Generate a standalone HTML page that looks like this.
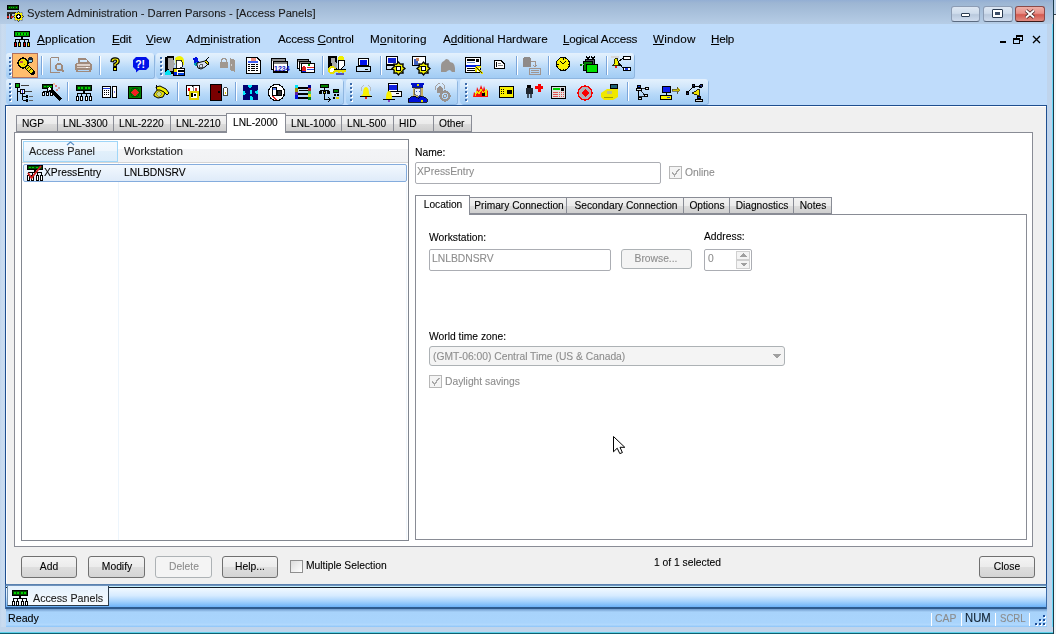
<!DOCTYPE html>
<html><head><meta charset="utf-8"><style>
html,body{margin:0;padding:0;width:1056px;height:634px;overflow:hidden;background:#c4d7ed}
.t{position:absolute;white-space:nowrap;font-family:"Liberation Sans", sans-serif;will-change:transform;-webkit-text-stroke:0.1px currentColor}
u{text-decoration:underline;text-underline-offset:1px}
</style></head><body>
<div style="position:absolute;left:0;top:0;width:1056px;height:634px;background:#c4d7ed"></div><div style="position:absolute;left:0px;top:0px;width:1056px;height:24px;background:linear-gradient(#93aed4 0px,#9db6d3 3px,#b6cde6 24px)"></div><div style="position:absolute;left:0px;top:24px;width:6px;height:610px;background:linear-gradient(90deg,#c0d4ea,#cadcf0 2px,#c6daef)"></div><div style="position:absolute;left:1047px;top:24px;width:9px;height:610px;background:#bfd4ec"></div><div style="position:absolute;left:1052px;top:24px;width:1px;height:610px;background:#69d8f8"></div><div style="position:absolute;left:1053px;top:0px;width:1px;height:634px;background:#1a3a4a"></div><div style="position:absolute;left:1054px;top:0px;width:2px;height:14px;background:#c4d8ee"></div><div style="position:absolute;left:1054px;top:14px;width:2px;height:1px;background:#404850"></div><div style="position:absolute;left:1054px;top:15px;width:2px;height:619px;background:#f6f6f6"></div><div style="position:absolute;left:0px;top:627px;width:1053px;height:5px;background:#c0d5ec"></div><div style="position:absolute;left:0px;top:632px;width:1053px;height:1px;background:#5fd0ea"></div><div style="position:absolute;left:0px;top:633px;width:1053px;height:1px;background:#0f6070"></div><div class="t" style="left:27px;top:8.02px;font-size:11.2px;line-height:11.2px;color:#1a1a1a;">System Administration - Darren Parsons - [Access Panels]</div><div style="position:absolute;left:951px;top:6px;width:29px;height:16px;box-sizing:border-box;border:1px solid #8c9cb4;border-bottom-color:#5a6a80;border-radius:3px;background:linear-gradient(#dde7f3,#cfdcec 45%,#b9c9dd 55%,#cfdcee)"></div><div style="position:absolute;left:983px;top:6px;width:30px;height:16px;box-sizing:border-box;border:1px solid #8c9cb4;border-bottom-color:#5a6a80;border-radius:3px;background:linear-gradient(#dde7f3,#cfdcec 45%,#b9c9dd 55%,#cfdcee)"></div><div style="position:absolute;left:1015px;top:6px;width:30px;height:16px;box-sizing:border-box;border:1px solid #8a4a48;border-bottom-color:#3a1a1a;border-radius:3px;background:linear-gradient(#eeb0a8,#e89088 45%,#d45a50 55%,#e08a80)"></div><div style="position:absolute;left:961px;top:13px;width:9px;height:4px;box-sizing:border-box;border:1px solid #2a3a50;background:#fff;border-radius:1px"></div><div style="position:absolute;left:992px;top:9px;width:11px;height:9px;box-sizing:border-box;border:1px solid #2a3a50;background:#fff;border-radius:1px"></div><div style="position:absolute;left:995px;top:12px;width:5px;height:3px;background:#3a4c66"></div><svg style="position:absolute;left:1024px;top:9px;overflow:visible" width="12" height="10" viewBox="0 0 12 10" shape-rendering="crispEdges"><path d="M2 1.5 L10 8.5 M10 1.5 L2 8.5" stroke="#3a1a1a" stroke-width="3.6" fill="none" shape-rendering="geometricPrecision"/><path d="M2 1.5 L10 8.5 M10 1.5 L2 8.5" stroke="#fff" stroke-width="2" fill="none" shape-rendering="geometricPrecision"/></svg><div style="position:absolute;left:6px;top:24px;width:1041px;height:81px;background:#bfdcfb"></div><div class="t" style="left:37px;top:33.10px;font-size:11.7px;line-height:11.7px;color:#000;letter-spacing:0.115px;"><u>A</u>pplication</div><div class="t" style="left:111.5px;top:33.10px;font-size:11.7px;line-height:11.7px;color:#000;letter-spacing:-0.228px;"><u>E</u>dit</div><div class="t" style="left:145.75px;top:33.10px;font-size:11.7px;line-height:11.7px;color:#000;letter-spacing:-0.037px;"><u>V</u>iew</div><div class="t" style="left:186.25px;top:33.10px;font-size:11.7px;line-height:11.7px;color:#000;letter-spacing:0.062px;">Ad<u>m</u>inistration</div><div class="t" style="left:277.75px;top:33.10px;font-size:11.7px;line-height:11.7px;color:#000;letter-spacing:-0.209px;">Access <u>C</u>ontrol</div><div class="t" style="left:369.6px;top:33.10px;font-size:11.7px;line-height:11.7px;color:#000;letter-spacing:0.207px;">M<u>o</u>nitoring</div><div class="t" style="left:442.75px;top:33.10px;font-size:11.7px;line-height:11.7px;color:#000;letter-spacing:-0.032px;">A<u>d</u>ditional Hardware</div><div class="t" style="left:563px;top:33.10px;font-size:11.7px;line-height:11.7px;color:#000;letter-spacing:-0.225px;"><u>L</u>ogical Access</div><div class="t" style="left:653px;top:33.10px;font-size:11.7px;line-height:11.7px;color:#000;letter-spacing:0.148px;"><u>W</u>indow</div><div class="t" style="left:711.25px;top:33.10px;font-size:11.7px;line-height:11.7px;color:#000;letter-spacing:-0.266px;"><u>H</u>elp</div><div style="position:absolute;left:1000px;top:41px;width:6px;height:2px;background:#000"></div><div style="position:absolute;left:1016px;top:35px;width:7px;height:6px;box-sizing:border-box;border:1px solid #000;border-top-width:2px"></div><div style="position:absolute;left:1013px;top:38px;width:7px;height:6px;box-sizing:border-box;border:1px solid #000;border-top-width:2px;background:#bfdcfb"></div><svg style="position:absolute;left:1032px;top:35px;overflow:visible" width="9" height="9" viewBox="0 0 9 9" shape-rendering="crispEdges"><path d="M1 1 L8 8 M8 1 L1 8" stroke="#000" stroke-width="1.3" fill="none" shape-rendering="geometricPrecision"/></svg><div style="position:absolute;left:6px;top:53px;width:148px;height:25px;box-sizing:border-box;border-radius:3px;background:linear-gradient(#e4f1fd,#d2e7fb 30%,#b7d9f9 60%,#a2ccf4);box-shadow:1px 1px 0 #8fb6e0"></div><div style="position:absolute;left:156px;top:53px;width:478px;height:25px;box-sizing:border-box;border-radius:3px;background:linear-gradient(#e4f1fd,#d2e7fb 30%,#b7d9f9 60%,#a2ccf4);box-shadow:1px 1px 0 #8fb6e0"></div><div style="position:absolute;left:6px;top:79px;width:337px;height:25px;box-sizing:border-box;border-radius:3px;background:linear-gradient(#e4f1fd,#d2e7fb 30%,#b7d9f9 60%,#a2ccf4);box-shadow:1px 1px 0 #8fb6e0"></div><div style="position:absolute;left:346px;top:79px;width:111px;height:25px;box-sizing:border-box;border-radius:3px;background:linear-gradient(#e4f1fd,#d2e7fb 30%,#b7d9f9 60%,#a2ccf4);box-shadow:1px 1px 0 #8fb6e0"></div><div style="position:absolute;left:460px;top:79px;width:248px;height:25px;box-sizing:border-box;border-radius:3px;background:linear-gradient(#e4f1fd,#d2e7fb 30%,#b7d9f9 60%,#a2ccf4);box-shadow:1px 1px 0 #8fb6e0"></div><div style="position:absolute;left:10px;top:58px;width:2px;height:2px;background:#fff"></div><div style="position:absolute;left:9px;top:57px;width:2px;height:2px;background:#3d6cab"></div><div style="position:absolute;left:10px;top:62px;width:2px;height:2px;background:#fff"></div><div style="position:absolute;left:9px;top:61px;width:2px;height:2px;background:#3d6cab"></div><div style="position:absolute;left:10px;top:66px;width:2px;height:2px;background:#fff"></div><div style="position:absolute;left:9px;top:65px;width:2px;height:2px;background:#3d6cab"></div><div style="position:absolute;left:10px;top:70px;width:2px;height:2px;background:#fff"></div><div style="position:absolute;left:9px;top:69px;width:2px;height:2px;background:#3d6cab"></div><div style="position:absolute;left:10px;top:74px;width:2px;height:2px;background:#fff"></div><div style="position:absolute;left:9px;top:73px;width:2px;height:2px;background:#3d6cab"></div><div style="position:absolute;left:161px;top:58px;width:2px;height:2px;background:#fff"></div><div style="position:absolute;left:160px;top:57px;width:2px;height:2px;background:#3d6cab"></div><div style="position:absolute;left:161px;top:62px;width:2px;height:2px;background:#fff"></div><div style="position:absolute;left:160px;top:61px;width:2px;height:2px;background:#3d6cab"></div><div style="position:absolute;left:161px;top:66px;width:2px;height:2px;background:#fff"></div><div style="position:absolute;left:160px;top:65px;width:2px;height:2px;background:#3d6cab"></div><div style="position:absolute;left:161px;top:70px;width:2px;height:2px;background:#fff"></div><div style="position:absolute;left:160px;top:69px;width:2px;height:2px;background:#3d6cab"></div><div style="position:absolute;left:161px;top:74px;width:2px;height:2px;background:#fff"></div><div style="position:absolute;left:160px;top:73px;width:2px;height:2px;background:#3d6cab"></div><div style="position:absolute;left:10px;top:84px;width:2px;height:2px;background:#fff"></div><div style="position:absolute;left:9px;top:83px;width:2px;height:2px;background:#3d6cab"></div><div style="position:absolute;left:10px;top:88px;width:2px;height:2px;background:#fff"></div><div style="position:absolute;left:9px;top:87px;width:2px;height:2px;background:#3d6cab"></div><div style="position:absolute;left:10px;top:92px;width:2px;height:2px;background:#fff"></div><div style="position:absolute;left:9px;top:91px;width:2px;height:2px;background:#3d6cab"></div><div style="position:absolute;left:10px;top:96px;width:2px;height:2px;background:#fff"></div><div style="position:absolute;left:9px;top:95px;width:2px;height:2px;background:#3d6cab"></div><div style="position:absolute;left:10px;top:100px;width:2px;height:2px;background:#fff"></div><div style="position:absolute;left:9px;top:99px;width:2px;height:2px;background:#3d6cab"></div><div style="position:absolute;left:351px;top:84px;width:2px;height:2px;background:#fff"></div><div style="position:absolute;left:350px;top:83px;width:2px;height:2px;background:#3d6cab"></div><div style="position:absolute;left:351px;top:88px;width:2px;height:2px;background:#fff"></div><div style="position:absolute;left:350px;top:87px;width:2px;height:2px;background:#3d6cab"></div><div style="position:absolute;left:351px;top:92px;width:2px;height:2px;background:#fff"></div><div style="position:absolute;left:350px;top:91px;width:2px;height:2px;background:#3d6cab"></div><div style="position:absolute;left:351px;top:96px;width:2px;height:2px;background:#fff"></div><div style="position:absolute;left:350px;top:95px;width:2px;height:2px;background:#3d6cab"></div><div style="position:absolute;left:351px;top:100px;width:2px;height:2px;background:#fff"></div><div style="position:absolute;left:350px;top:99px;width:2px;height:2px;background:#3d6cab"></div><div style="position:absolute;left:466px;top:84px;width:2px;height:2px;background:#fff"></div><div style="position:absolute;left:465px;top:83px;width:2px;height:2px;background:#3d6cab"></div><div style="position:absolute;left:466px;top:88px;width:2px;height:2px;background:#fff"></div><div style="position:absolute;left:465px;top:87px;width:2px;height:2px;background:#3d6cab"></div><div style="position:absolute;left:466px;top:92px;width:2px;height:2px;background:#fff"></div><div style="position:absolute;left:465px;top:91px;width:2px;height:2px;background:#3d6cab"></div><div style="position:absolute;left:466px;top:96px;width:2px;height:2px;background:#fff"></div><div style="position:absolute;left:465px;top:95px;width:2px;height:2px;background:#3d6cab"></div><div style="position:absolute;left:466px;top:100px;width:2px;height:2px;background:#fff"></div><div style="position:absolute;left:465px;top:99px;width:2px;height:2px;background:#3d6cab"></div><div style="position:absolute;left:41px;top:56px;width:1px;height:19px;background:#7ba6db"></div><div style="position:absolute;left:42px;top:56px;width:1px;height:19px;background:#fff"></div><div style="position:absolute;left:99px;top:56px;width:1px;height:19px;background:#7ba6db"></div><div style="position:absolute;left:100px;top:56px;width:1px;height:19px;background:#fff"></div><div style="position:absolute;left:322px;top:56px;width:1px;height:19px;background:#7ba6db"></div><div style="position:absolute;left:323px;top:56px;width:1px;height:19px;background:#fff"></div><div style="position:absolute;left:380px;top:56px;width:1px;height:19px;background:#7ba6db"></div><div style="position:absolute;left:381px;top:56px;width:1px;height:19px;background:#fff"></div><div style="position:absolute;left:516px;top:56px;width:1px;height:19px;background:#7ba6db"></div><div style="position:absolute;left:517px;top:56px;width:1px;height:19px;background:#fff"></div><div style="position:absolute;left:548px;top:56px;width:1px;height:19px;background:#7ba6db"></div><div style="position:absolute;left:549px;top:56px;width:1px;height:19px;background:#fff"></div><div style="position:absolute;left:606px;top:56px;width:1px;height:19px;background:#7ba6db"></div><div style="position:absolute;left:607px;top:56px;width:1px;height:19px;background:#fff"></div><div style="position:absolute;left:67px;top:82px;width:1px;height:19px;background:#7ba6db"></div><div style="position:absolute;left:68px;top:82px;width:1px;height:19px;background:#fff"></div><div style="position:absolute;left:177px;top:82px;width:1px;height:19px;background:#7ba6db"></div><div style="position:absolute;left:178px;top:82px;width:1px;height:19px;background:#fff"></div><div style="position:absolute;left:235px;top:82px;width:1px;height:19px;background:#7ba6db"></div><div style="position:absolute;left:236px;top:82px;width:1px;height:19px;background:#fff"></div><div style="position:absolute;left:627px;top:82px;width:1px;height:19px;background:#7ba6db"></div><div style="position:absolute;left:628px;top:82px;width:1px;height:19px;background:#fff"></div><div style="position:absolute;left:5px;top:105px;width:1042px;height:480px;box-sizing:border-box;border:1px solid #1f4f8f;border-bottom:1px solid #4c7ab0;background:#f0f0f0"></div><div style="position:absolute;left:6px;top:106px;width:1040px;height:1px;background:#fff"></div><div style="position:absolute;left:6px;top:106px;width:1px;height:477px;background:#fff"></div><div style="position:absolute;left:14px;top:132px;width:1019px;height:415px;box-sizing:border-box;border:1px solid #898c95;background:#fff"></div><div style="position:absolute;left:16px;top:115px;width:41px;height:17px;box-sizing:border-box;border:1px solid #898c95;border-right:none;background:linear-gradient(#f2f2f2,#ebebeb 50%,#dddddd 51%,#cfcfcf)"></div><div class="t" style="left:21.5px;top:119.37px;font-size:10.2px;line-height:10.2px;color:#000;">NGP</div><div style="position:absolute;left:57px;top:115px;width:56px;height:17px;box-sizing:border-box;border:1px solid #898c95;border-right:none;background:linear-gradient(#f2f2f2,#ebebeb 50%,#dddddd 51%,#cfcfcf)"></div><div class="t" style="left:62.5px;top:119.37px;font-size:10.2px;line-height:10.2px;color:#000;">LNL-3300</div><div style="position:absolute;left:113px;top:115px;width:57px;height:17px;box-sizing:border-box;border:1px solid #898c95;border-right:none;background:linear-gradient(#f2f2f2,#ebebeb 50%,#dddddd 51%,#cfcfcf)"></div><div class="t" style="left:118.5px;top:119.37px;font-size:10.2px;line-height:10.2px;color:#000;">LNL-2220</div><div style="position:absolute;left:170px;top:115px;width:57px;height:17px;box-sizing:border-box;border:1px solid #898c95;border-right:none;background:linear-gradient(#f2f2f2,#ebebeb 50%,#dddddd 51%,#cfcfcf)"></div><div class="t" style="left:175.5px;top:119.37px;font-size:10.2px;line-height:10.2px;color:#000;">LNL-2210</div><div style="position:absolute;left:226px;top:113px;width:60px;height:20px;box-sizing:border-box;border:1px solid #898c95;border-bottom:none;background:#fff"></div><div class="t" style="left:232.5px;top:117.87px;font-size:10.2px;line-height:10.2px;color:#000;">LNL-2000</div><div style="position:absolute;left:285px;top:115px;width:56px;height:17px;box-sizing:border-box;border:1px solid #898c95;border-right:none;background:linear-gradient(#f2f2f2,#ebebeb 50%,#dddddd 51%,#cfcfcf)"></div><div class="t" style="left:290.5px;top:119.37px;font-size:10.2px;line-height:10.2px;color:#000;">LNL-1000</div><div style="position:absolute;left:341px;top:115px;width:52px;height:17px;box-sizing:border-box;border:1px solid #898c95;border-right:none;background:linear-gradient(#f2f2f2,#ebebeb 50%,#dddddd 51%,#cfcfcf)"></div><div class="t" style="left:346.5px;top:119.37px;font-size:10.2px;line-height:10.2px;color:#000;">LNL-500</div><div style="position:absolute;left:393px;top:115px;width:40px;height:17px;box-sizing:border-box;border:1px solid #898c95;border-right:none;background:linear-gradient(#f2f2f2,#ebebeb 50%,#dddddd 51%,#cfcfcf)"></div><div class="t" style="left:398.5px;top:119.37px;font-size:10.2px;line-height:10.2px;color:#000;">HID</div><div style="position:absolute;left:433px;top:115px;width:38px;height:17px;box-sizing:border-box;border:1px solid #898c95;border-right:none;background:linear-gradient(#f2f2f2,#ebebeb 50%,#dddddd 51%,#cfcfcf)"></div><div class="t" style="left:438.5px;top:119.37px;font-size:10.2px;line-height:10.2px;color:#000;">Other</div><div style="position:absolute;left:471px;top:115px;width:1px;height:17px;background:#898c95"></div><div style="position:absolute;left:21px;top:139px;width:388px;height:402px;box-sizing:border-box;border:1px solid #828790;background:#fff"></div><div style="position:absolute;left:22px;top:140px;width:386px;height:23px;background:linear-gradient(#ffffff,#ffffff 40%,#f3f4f6 41%,#f1f2f4)"></div><div style="position:absolute;left:22px;top:162px;width:386px;height:1px;background:#d5d5d5"></div><div style="position:absolute;left:23px;top:141px;width:95px;height:21px;box-sizing:border-box;border:1px solid #9fd6f8;background:linear-gradient(#f3f9fe,#eef6fd 45%,#e2f0fb 46%,#dbecfa)"></div><div style="position:absolute;left:117px;top:141px;width:1px;height:21px;background:#9fd6f8"></div><div class="t" style="left:28.5px;top:146.07px;font-size:10.9px;line-height:10.9px;color:#1e1e1e;">Access Panel</div><div class="t" style="left:124px;top:145.82px;font-size:11.2px;line-height:11.2px;color:#1e1e1e;">Workstation</div><svg style="position:absolute;left:66px;top:141px;overflow:visible" width="9" height="5" viewBox="0 0 9 5" shape-rendering="crispEdges"><path d="M1 4 L4.5 1 L8 4" stroke="#5d8fc4" stroke-width="1.3" fill="none" shape-rendering="geometricPrecision"/></svg><div style="position:absolute;left:118px;top:163px;width:1px;height:377px;background:#edf5fc"></div><div style="position:absolute;left:406px;top:182px;width:1px;height:358px;background:#f0f6fc"></div><div style="position:absolute;left:23px;top:164px;width:384px;height:18px;box-sizing:border-box;border:1px solid #84acdd;border-radius:2px;background:linear-gradient(#f2f8fe,#dfebf9)"></div><div class="t" style="left:44px;top:168.28px;font-size:10.3px;line-height:10.3px;color:#000;">XPressEntry</div><div class="t" style="left:124px;top:168.28px;font-size:10.3px;line-height:10.3px;color:#000;">LNLBDNSRV</div><div class="t" style="left:415px;top:147.78px;font-size:10.3px;line-height:10.3px;color:#000;">Name:</div><div style="position:absolute;left:415px;top:162px;width:246px;height:22px;box-sizing:border-box;border:1px solid #abadb3;border-radius:2px;background:#fff"></div><div class="t" style="left:417px;top:166.78px;font-size:10.3px;line-height:10.3px;color:#8d8d8d;">XPressEntry</div><div style="position:absolute;left:669px;top:166px;width:13px;height:13px;box-sizing:border-box;border:1px solid #b7b7b7;background:#f4f4f4"></div><svg style="position:absolute;left:671px;top:168px;overflow:visible" width="9" height="9" viewBox="0 0 9 9" shape-rendering="crispEdges"><path d="M1 4.5 L3.5 7.5 L8 1" stroke="#a8a8a8" stroke-width="1.5" fill="none"/></svg><div class="t" style="left:685px;top:168.28px;font-size:10.3px;line-height:10.3px;color:#8d8d8d;">Online</div><div style="position:absolute;left:415px;top:214px;width:612px;height:326px;box-sizing:border-box;border:1px solid #898c95;background:#fff"></div><div style="position:absolute;left:415px;top:195px;width:55px;height:20px;box-sizing:border-box;border:1px solid #898c95;border-bottom:none;background:#fff"></div><div class="t" style="left:342.5px;width:200px;text-align:center;top:199.87px;font-size:10.2px;line-height:10.2px;color:#000;">Location</div><div style="position:absolute;left:470px;top:197px;width:97px;height:17px;box-sizing:border-box;border:1px solid #898c95;border-left:none;background:linear-gradient(#f2f2f2,#ebebeb 50%,#dddddd 51%,#cfcfcf)"></div><div class="t" style="left:418.5px;width:200px;text-align:center;top:201.37px;font-size:10.2px;line-height:10.2px;color:#000;">Primary Connection</div><div style="position:absolute;left:567px;top:197px;width:117px;height:17px;box-sizing:border-box;border:1px solid #898c95;border-left:none;background:linear-gradient(#f2f2f2,#ebebeb 50%,#dddddd 51%,#cfcfcf)"></div><div class="t" style="left:525.5px;width:200px;text-align:center;top:201.37px;font-size:10.2px;line-height:10.2px;color:#000;">Secondary Connection</div><div style="position:absolute;left:684px;top:197px;width:46px;height:17px;box-sizing:border-box;border:1px solid #898c95;border-left:none;background:linear-gradient(#f2f2f2,#ebebeb 50%,#dddddd 51%,#cfcfcf)"></div><div class="t" style="left:607.0px;width:200px;text-align:center;top:201.37px;font-size:10.2px;line-height:10.2px;color:#000;">Options</div><div style="position:absolute;left:730px;top:197px;width:64px;height:17px;box-sizing:border-box;border:1px solid #898c95;border-left:none;background:linear-gradient(#f2f2f2,#ebebeb 50%,#dddddd 51%,#cfcfcf)"></div><div class="t" style="left:662.0px;width:200px;text-align:center;top:201.37px;font-size:10.2px;line-height:10.2px;color:#000;">Diagnostics</div><div style="position:absolute;left:794px;top:197px;width:38px;height:17px;box-sizing:border-box;border:1px solid #898c95;border-left:none;background:linear-gradient(#f2f2f2,#ebebeb 50%,#dddddd 51%,#cfcfcf)"></div><div class="t" style="left:713.0px;width:200px;text-align:center;top:201.37px;font-size:10.2px;line-height:10.2px;color:#000;">Notes</div><div class="t" style="left:429px;top:233.28px;font-size:10.3px;line-height:10.3px;color:#000;">Workstation:</div><div style="position:absolute;left:429px;top:249px;width:182px;height:22px;box-sizing:border-box;border:1px solid #abadb3;border-radius:2px;background:#fff"></div><div class="t" style="left:432px;top:253.78px;font-size:10.3px;line-height:10.3px;color:#8d8d8d;">LNLBDNSRV</div><div style="position:absolute;left:621px;top:249px;width:71px;height:20px;box-sizing:border-box;border:1px solid #adb2b5;border-radius:3px;background:#f4f4f4"></div><div class="t" style="left:556.0px;width:200px;text-align:center;top:254.28px;font-size:10.3px;line-height:10.3px;color:#8d8d8d;">Browse...</div><div class="t" style="left:704px;top:232.28px;font-size:10.3px;line-height:10.3px;color:#000;">Address:</div><div style="position:absolute;left:704px;top:249px;width:48px;height:22px;box-sizing:border-box;border:1px solid #abadb3;border-radius:2px;background:#fff"></div><div class="t" style="left:708px;top:253.78px;font-size:10.3px;line-height:10.3px;color:#8d8d8d;">0</div><div style="position:absolute;left:736px;top:251px;width:14px;height:9px;box-sizing:border-box;border:1px solid #d0d0d0;background:#f4f4f4"></div><div style="position:absolute;left:736px;top:260px;width:14px;height:9px;box-sizing:border-box;border:1px solid #d0d0d0;background:#f4f4f4"></div><svg style="position:absolute;left:740px;top:253px;overflow:visible" width="7" height="4" viewBox="0 0 7 4" shape-rendering="crispEdges"><path d="M0 3.5 L3.5 0 L7 3.5Z" fill="#a0a0a0"/></svg><svg style="position:absolute;left:740px;top:263px;overflow:visible" width="7" height="4" viewBox="0 0 7 4" shape-rendering="crispEdges"><path d="M0 0 L3.5 3.5 L7 0Z" fill="#a0a0a0"/></svg><div class="t" style="left:429px;top:332.28px;font-size:10.3px;line-height:10.3px;color:#000;">World time zone:</div><div style="position:absolute;left:429px;top:346px;width:356px;height:20px;box-sizing:border-box;border:1px solid #adb2b5;border-radius:3px;background:#f4f4f4"></div><div class="t" style="left:433px;top:351.78px;font-size:10.3px;line-height:10.3px;color:#8d8d8d;">(GMT-06:00) Central Time (US &amp; Canada)</div><svg style="position:absolute;left:772px;top:354px;overflow:visible" width="9" height="5" viewBox="0 0 9 5" shape-rendering="crispEdges"><path d="M0 0 L9 0 L4.5 4.5Z" fill="#a0a0a0"/></svg><div style="position:absolute;left:429px;top:375px;width:13px;height:13px;box-sizing:border-box;border:1px solid #b7b7b7;background:#f4f4f4"></div><svg style="position:absolute;left:431px;top:377px;overflow:visible" width="9" height="9" viewBox="0 0 9 9" shape-rendering="crispEdges"><path d="M1 4.5 L3.5 7.5 L8 1" stroke="#a8a8a8" stroke-width="1.5" fill="none"/></svg><div class="t" style="left:445px;top:376.78px;font-size:10.3px;line-height:10.3px;color:#8d8d8d;">Daylight savings</div><svg style="position:absolute;left:612px;top:435px;overflow:visible" width="14" height="20" viewBox="0 0 14 20" shape-rendering="crispEdges"><path d="M1.5 1.5 L1.5 16.8 L5.2 13.2 L7.8 18.6 L10.4 17.6 L8 12.3 L12.8 12.3 Z" fill="#fff" stroke="#000" stroke-width="1" stroke-linejoin="round" shape-rendering="geometricPrecision"/></svg><div style="position:absolute;left:21px;top:556px;width:56px;height:22px;box-sizing:border-box;border:1px solid #707070;border-radius:3px;background:linear-gradient(#f4f4f4,#ececec 48%,#dedede 52%,#d4d4d4)"></div><div class="t" style="left:-51.0px;width:200px;text-align:center;top:562.28px;font-size:10.3px;line-height:10.3px;color:#000;">Add</div><div style="position:absolute;left:88px;top:556px;width:57px;height:22px;box-sizing:border-box;border:1px solid #707070;border-radius:3px;background:linear-gradient(#f4f4f4,#ececec 48%,#dedede 52%,#d4d4d4)"></div><div class="t" style="left:16.5px;width:200px;text-align:center;top:562.28px;font-size:10.3px;line-height:10.3px;color:#000;">Modify</div><div style="position:absolute;left:155px;top:556px;width:57px;height:22px;box-sizing:border-box;border:1px solid #adb2b5;border-radius:3px;background:#f4f4f4"></div><div class="t" style="left:83.5px;width:200px;text-align:center;top:562.28px;font-size:10.3px;line-height:10.3px;color:#8d8d8d;">Delete</div><div style="position:absolute;left:222px;top:556px;width:56px;height:22px;box-sizing:border-box;border:1px solid #707070;border-radius:3px;background:linear-gradient(#f4f4f4,#ececec 48%,#dedede 52%,#d4d4d4)"></div><div class="t" style="left:150.0px;width:200px;text-align:center;top:562.28px;font-size:10.3px;line-height:10.3px;color:#000;">Help...</div><div style="position:absolute;left:290px;top:560px;width:13px;height:13px;box-sizing:border-box;border:1px solid #8f8f8f;background:linear-gradient(135deg,#dcdcdc,#fff)"></div><div class="t" style="left:306px;top:560.78px;font-size:10.3px;line-height:10.3px;color:#000;">Multiple Selection</div><div class="t" style="left:654px;top:557.78px;font-size:10.3px;line-height:10.3px;color:#000;">1 of 1 selected</div><div style="position:absolute;left:979px;top:556px;width:56px;height:22px;box-sizing:border-box;border:1px solid #707070;border-radius:3px;background:linear-gradient(#f4f4f4,#ececec 48%,#dedede 52%,#d4d4d4)"></div><div class="t" style="left:907.0px;width:200px;text-align:center;top:562.28px;font-size:10.3px;line-height:10.3px;color:#000;">Close</div><div style="position:absolute;left:6px;top:584px;width:1041px;height:2px;background:linear-gradient(#4f78a8,#7a9cc4)"></div><div style="position:absolute;left:6px;top:586px;width:1041px;height:1px;background:#c4f0ff"></div><div style="position:absolute;left:6px;top:587px;width:1041px;height:1px;background:#121a24"></div><div style="position:absolute;left:6px;top:588px;width:1041px;height:19px;background:linear-gradient(#f2f9ff,#d6ebff 40%,#a6d2fd 70%,#6cb2f8 100%)"></div><div style="position:absolute;left:6px;top:607px;width:1041px;height:2px;background:#2e5a8e"></div><div style="position:absolute;left:6px;top:609px;width:1041px;height:3px;background:linear-gradient(#6f9acb,#a8d2fa)"></div><div style="position:absolute;left:5px;top:584px;width:1px;height:25px;background:#3a6aa8"></div><div style="position:absolute;left:1046px;top:584px;width:1px;height:25px;background:#3a6aa8"></div><div style="position:absolute;left:7px;top:586px;width:102px;height:20px;box-sizing:border-box;border-right:1px solid #2a3a4a;border-bottom:1px solid #2a3a4a;border-left:1px solid #7090b0;background:linear-gradient(#e4f1fd,#f6fbff)"></div><div class="t" style="left:32.5px;top:592.94px;font-size:10.7px;line-height:10.7px;color:#1a1a1a;">Access Panels</div><div style="position:absolute;left:6px;top:612px;width:1041px;height:15px;background:linear-gradient(#a8d3fb,#a9d4fc 70%,#b2d9fd 85%,#8cc4f8)"></div><div class="t" style="left:8px;top:613.44px;font-size:10.7px;line-height:10.7px;color:#000;">Ready</div><div class="t" style="left:935px;top:613.70px;font-size:10.4px;line-height:10.4px;color:#8c8c8c;transform:scaleY(1.12);transform-origin:0 80%">CAP</div><div class="t" style="left:965px;top:612.93px;font-size:11.3px;line-height:11.3px;color:#102030;transform:scaleY(1.12);transform-origin:0 80%">NUM</div><div class="t" style="left:1000px;top:614.37px;font-size:9.6px;line-height:9.6px;color:#8c8c8c;transform:scaleY(1.12);transform-origin:0 80%">SCRL</div><div style="position:absolute;left:931px;top:613px;width:1px;height:13px;background:#fff"></div><div style="position:absolute;left:961px;top:613px;width:1px;height:13px;background:#fff"></div><div style="position:absolute;left:995px;top:613px;width:1px;height:13px;background:#fff"></div><div style="position:absolute;left:1029px;top:613px;width:1px;height:13px;background:#fff"></div><div style="position:absolute;left:1044px;top:616px;width:2px;height:2px;background:#fff"></div><div style="position:absolute;left:1043px;top:615px;width:2px;height:2px;background:#1d4f9a"></div><div style="position:absolute;left:1040px;top:620px;width:2px;height:2px;background:#fff"></div><div style="position:absolute;left:1039px;top:619px;width:2px;height:2px;background:#1d4f9a"></div><div style="position:absolute;left:1044px;top:620px;width:2px;height:2px;background:#fff"></div><div style="position:absolute;left:1043px;top:619px;width:2px;height:2px;background:#1d4f9a"></div><div style="position:absolute;left:1036px;top:624px;width:2px;height:2px;background:#fff"></div><div style="position:absolute;left:1035px;top:623px;width:2px;height:2px;background:#1d4f9a"></div><div style="position:absolute;left:1040px;top:624px;width:2px;height:2px;background:#fff"></div><div style="position:absolute;left:1039px;top:623px;width:2px;height:2px;background:#1d4f9a"></div><div style="position:absolute;left:1044px;top:624px;width:2px;height:2px;background:#fff"></div><div style="position:absolute;left:1043px;top:623px;width:2px;height:2px;background:#1d4f9a"></div><svg style="position:absolute;left:7px;top:5px;overflow:visible" width="18" height="18" viewBox="0 0 18 18" shape-rendering="crispEdges"><rect x="0.5" y="0.5" width="11" height="4" fill="#004800" stroke="#000" stroke-width="1"/><rect x="2" y="2" width="1" height="1" fill="#00d000" /><rect x="4" y="2" width="1" height="1" fill="#00d000" /><rect x="6" y="2" width="1" height="1" fill="#00d000" /><rect x="9" y="2" width="1" height="1" fill="#00d000" /><rect x="0" y="7" width="9" height="2" fill="#303030" /><rect x="0" y="9" width="2" height="5" fill="#202020" /><rect x="3" y="9" width="2" height="5" fill="#202020" /><rect x="0" y="11" width="2" height="2" fill="#d02020" /><rect x="4" y="11" width="2" height="2" fill="#d02020" /><path d="M17.00 11.50 L15.06 12.97 L15.39 15.39 L12.97 15.06 L11.50 17.00 L10.03 15.06 L7.61 15.39 L7.94 12.97 L6.00 11.50 L7.94 10.03 L7.61 7.61 L10.03 7.94 L11.50 6.00 L12.97 7.94 L15.39 7.61 L15.06 10.03 Z" fill="#000" stroke="none" stroke-width="1" shape-rendering="geometricPrecision"/><circle cx="11.5" cy="11.5" r="3.3" fill="none" stroke="#f8f000" stroke-width="1.6"/><circle cx="11.5" cy="11.5" r="1.2" fill="#fff" stroke="none" stroke-width="1"/></svg><svg style="position:absolute;left:14px;top:31px;overflow:visible" width="16" height="16" viewBox="0 0 16 16" shape-rendering="crispEdges"><rect x="0.5" y="0.5" width="15" height="5" fill="#00a000" stroke="#000" stroke-width="1"/><rect x="2" y="2" width="12" height="2" fill="#00e000" /><rect x="3" y="2" width="1" height="2" fill="#004000" /><rect x="6" y="2" width="1" height="2" fill="#004000" /><rect x="9" y="2" width="1" height="2" fill="#004000" /><rect x="12" y="2" width="1" height="2" fill="#004000" /><rect x="7" y="6" width="2" height="3" fill="#000" /><rect x="1" y="8" width="14" height="1" fill="#000" /><rect x="1" y="8" width="1" height="3" fill="#000" /><rect x="5" y="8" width="1" height="3" fill="#000" /><rect x="10" y="8" width="1" height="3" fill="#000" /><rect x="14" y="8" width="1" height="3" fill="#000" /><rect x="0.5" y="11.5" width="2" height="4" fill="#e00000" stroke="#000" stroke-width="1"/><rect x="4.5" y="11.5" width="2" height="4" fill="#f0e000" stroke="#000" stroke-width="1"/><rect x="9.5" y="11.5" width="2" height="4" fill="#e00000" stroke="#000" stroke-width="1"/><rect x="13.5" y="11.5" width="2" height="4" fill="#f0e000" stroke="#000" stroke-width="1"/></svg><svg style="position:absolute;left:12px;top:53px;overflow:visible" width="26" height="25" viewBox="0 0 26 25" shape-rendering="crispEdges"><rect x="0.5" y="0.5" width="25" height="24" fill="#ffbd6e" stroke="#b07060" stroke-width="1"/></svg><svg style="position:absolute;left:17px;top:57px;overflow:visible" width="18" height="18" viewBox="0 0 18 18" shape-rendering="crispEdges"><path d="M9 9 L15.5 15.5" fill="none" stroke="#000" stroke-width="5.5" stroke-linecap="round"/><path d="M9 9 L15.5 15.5" fill="none" stroke="#f0e000" stroke-width="3.2" /><path d="M10 12 L12 10 M12 14 L14 12" fill="none" stroke="#000" stroke-width="0.8" /><circle cx="6" cy="6" r="5" fill="#f0e000" stroke="#000" stroke-width="1.5"/><circle cx="4.5" cy="5" r="1.3" fill="#c05050" stroke="none" stroke-width="1"/><circle cx="7.5" cy="7.5" r="1" fill="#806000" stroke="none" stroke-width="1"/><circle cx="13.5" cy="3" r="2.8" fill="#202830" stroke="none" stroke-width="1"/><rect x="12" y="3" width="3" height="2" fill="#80d0f0" /></svg><svg style="position:absolute;left:50px;top:57px;overflow:visible" width="16" height="16" viewBox="0 0 16 16" shape-rendering="crispEdges"><path d="M0.5 0.5 H8.5 V4 M0.5 0.5 V15.5 H10" fill="none" stroke="#a08a7c" stroke-width="1" /><circle cx="9" cy="10" r="3" fill="none" stroke="#a08a7c" stroke-width="1.5"/><path d="M11 12 L14 15" fill="none" stroke="#a08a7c" stroke-width="2" /></svg><svg style="position:absolute;left:75px;top:58px;overflow:visible" width="16" height="14" viewBox="0 0 16 14" shape-rendering="crispEdges"><path d="M4 5 V1 H11 L13 3 V5" fill="none" stroke="#a08a7c" stroke-width="1.2" /><path d="M1 6.5 Q1 5 3 5 H14 Q16 5 16 7 V11 H1 Z" fill="#ddd0c8" stroke="#a08a7c" stroke-width="1.2" /><rect x="2" y="8" width="13" height="1" fill="#a08a7c" /><path d="M2 11 V13.5 H15 V11" fill="none" stroke="#a08a7c" stroke-width="1.2" /><rect x="11" y="9" width="2" height="1" fill="#fff" /></svg><svg style="position:absolute;left:110px;top:57px;overflow:visible" width="10" height="14" viewBox="0 0 10 14" shape-rendering="crispEdges"><path d="M1 4.5 Q1 0.8 5 0.8 Q9.2 0.8 9.2 4.2 Q9.2 6.5 6.3 7.8 V9.5 H3.8 V6.6 Q6.5 5.6 6.5 4.2 Q6.5 3 5 3 Q3.6 3 3.6 4.8 Z" fill="#f8f000" stroke="#000" stroke-width="1.2" shape-rendering="geometricPrecision"/><path d="M3.8 10.8 H6.3 V13.4 H3.8 Z" fill="#f8f000" stroke="#000" stroke-width="1.2" /></svg><svg style="position:absolute;left:133px;top:57px;overflow:visible" width="16" height="16" viewBox="0 0 16 16" shape-rendering="crispEdges"><path d="M3 0 H13 L16 3 V10 L13 13 H6 L3 15.5 V13 L0 10 V3 Z" fill="#0010e8" stroke="none" stroke-width="1" shape-rendering="geometricPrecision"/><text x="2.2" y="10.5" font-family="Liberation Sans" font-weight="bold" font-size="10.5" fill="#fff">?!</text></svg><svg style="position:absolute;left:165px;top:56px;overflow:visible" width="20" height="20" viewBox="0 0 20 20" shape-rendering="crispEdges"><path d="M0 3 Q0 0 4 0 H9 V18 H0 Z" fill="#000" stroke="none" stroke-width="1" /><path d="M3 3 Q3 2 5 2 H8 L9 6 L10 8 L9 9 V13 L7 15 H4 L3 10 Z" fill="#a8a8a8" stroke="none" stroke-width="1" /><path d="M10 2 Q12 0 15 0 Q19 1 19 5 V9 H11 Z" fill="#f0f000" stroke="none" stroke-width="1" shape-rendering="geometricPrecision"/><path d="M11 4 H16 L17 6 L18 8 L17 9 V11 L15 12 H11 Z" fill="#fff" stroke="#000" stroke-width="0.8" /><path d="M0 16 L3 14 L6 17 V19 H0 Z" fill="#00e0f0" stroke="none" stroke-width="1" /><rect x="8.5" y="12.5" width="11" height="7" fill="#fff" stroke="#000" stroke-width="1.2"/><rect x="9" y="13" width="3" height="3" fill="#f0e000" /><rect x="9" y="16" width="3" height="3" fill="#0020e0" /><rect x="13" y="14" width="6" height="1.5" fill="#000" /><rect x="13" y="17" width="6" height="1.5" fill="#0040e0" /></svg><svg style="position:absolute;left:193px;top:57px;overflow:visible" width="17" height="14" viewBox="0 0 17 14" shape-rendering="crispEdges"><path d="M0 1 L4 0 L6 5 L2 7 Z" fill="#0010e0" stroke="none" stroke-width="1" /><path d="M1 6 L4 5 L5 8 L2 9 Z" fill="#00a0c0" stroke="none" stroke-width="1" /><path d="M4 6 L8 5 L12 4 L15 7 L12 10 L8 12 L5 11 L4 8 Z" fill="#d8e0f0" stroke="#000" stroke-width="1" shape-rendering="geometricPrecision"/><circle cx="8" cy="9" r="2" fill="none" stroke="#404040" stroke-width="0.8"/><path d="M12 5 L14 2 L16 0" fill="none" stroke="#000" stroke-width="1" /><path d="M12 4 L16 7" fill="none" stroke="#000" stroke-width="2.5" /><path d="M12.5 4.5 L15.5 6.5" fill="none" stroke="#e0d000" stroke-width="1.2" /></svg><svg style="position:absolute;left:220px;top:58px;overflow:visible" width="16" height="15" viewBox="0 0 16 15" shape-rendering="crispEdges"><path d="M1.5 5 V3 Q1.5 0.5 4 0.5 Q6.5 0.5 6.5 3 V5" fill="none" stroke="#a09890" stroke-width="1.2" /><rect x="0" y="4" width="8" height="6" fill="#a09890" /><path d="M10 0 L15 2 V14 L10 12 Z" fill="#a09890" stroke="none" stroke-width="1" /><rect x="11" y="6" width="1" height="2" fill="#d0d0d0" /></svg><svg style="position:absolute;left:246px;top:57px;overflow:visible" width="15" height="17" viewBox="0 0 15 17" shape-rendering="crispEdges"><path d="M0.5 0.5 H11 L14.5 4 V16.5 H0.5 Z" fill="#fff" stroke="#000" stroke-width="1" /><rect x="5" y="1" width="5" height="3" fill="#f09080" /><rect x="2" y="4" width="10" height="2" fill="#4060f0" /><rect x="2" y="7" width="10" height="1" fill="#000" /><rect x="2" y="9" width="10" height="1" fill="#000" /><rect x="2" y="11" width="10" height="1" fill="#000" /><rect x="2" y="13" width="10" height="1" fill="#000" /><rect x="4" y="7" width="1" height="7" fill="#fff" /><rect x="9" y="7" width="1" height="7" fill="#fff" /></svg><svg style="position:absolute;left:271px;top:58px;overflow:visible" width="17" height="15" viewBox="0 0 17 15" shape-rendering="crispEdges"><rect x="0.5" y="0.5" width="14" height="11" fill="#fff" stroke="#000" stroke-width="1"/><rect x="1" y="1" width="13" height="2" fill="#909090" /><rect x="2.5" y="3.5" width="14" height="11" fill="#fff" stroke="#000" stroke-width="1"/><rect x="3" y="4" width="13" height="2" fill="#808080" /><text x="3" y="13" font-family="Liberation Sans" font-weight="bold" font-size="7" fill="#1020c0">1234</text><rect x="3" y="13" width="13" height="1" fill="#000" /></svg><svg style="position:absolute;left:297px;top:59px;overflow:visible" width="18" height="14" viewBox="0 0 18 14" shape-rendering="crispEdges"><rect x="0.5" y="0.5" width="11" height="9" fill="#fff" stroke="#000" stroke-width="1"/><rect x="1" y="1" width="10" height="2" fill="#808080" /><rect x="2.5" y="2.5" width="11" height="9" fill="#fff" stroke="#000" stroke-width="1"/><rect x="3" y="3" width="10" height="2" fill="#808080" /><rect x="4.5" y="4.5" width="13" height="9" fill="#fff" stroke="#000" stroke-width="1"/><path d="M7 6 L9 9 V12 H5 V9 Z" fill="#e02020" stroke="none" stroke-width="1" /><rect x="5" y="12" width="4" height="1" fill="#0020e0" /><circle cx="12" cy="6" r="1.3" fill="#00a000" stroke="none" stroke-width="1"/><rect x="10" y="8" width="7" height="1" fill="#e02020" /><rect x="10" y="10" width="7" height="1" fill="#2040e0" /></svg><svg style="position:absolute;left:328px;top:56px;overflow:visible" width="20" height="19" viewBox="0 0 20 19" shape-rendering="crispEdges"><rect x="0" y="0" width="9" height="16" fill="#000" /><path d="M3 2 H7 V6 L9 8 V12 H4 Z" fill="#a8a8a8" stroke="none" stroke-width="1" /><circle cx="13" cy="3" r="3" fill="#f0f000" stroke="none" stroke-width="1"/><path d="M10 4 H16 V10 L13 13 H10 Z" fill="#fff" stroke="#000" stroke-width="1" /><circle cx="4" cy="14" r="3" fill="#fff" stroke="#e8e000" stroke-width="2"/><rect x="6" y="13" width="12" height="3" fill="#e8e000" /><rect x="6" y="13" width="12" height="1" fill="#000" /><rect x="14" y="16" width="2" height="3" fill="#e8e000" /><rect x="10" y="16" width="2" height="2" fill="#e8e000" /><rect x="8" y="17" width="8" height="2" fill="#5050c0" /></svg><svg style="position:absolute;left:356px;top:58px;overflow:visible" width="15" height="14" viewBox="0 0 15 14" shape-rendering="crispEdges"><rect x="2.5" y="0.5" width="10" height="7" fill="#fff" stroke="#000" stroke-width="1"/><rect x="4" y="2" width="7" height="5" fill="#0010f0" /><path d="M0.5 8.5 H14.5 V13.5 H0.5 Z" fill="#c8e0f8" stroke="#000" stroke-width="1" /><rect x="9" y="11" width="3" height="1" fill="#000" /></svg><svg style="position:absolute;left:386px;top:56px;overflow:visible" width="19" height="19" viewBox="0 0 19 19" shape-rendering="crispEdges"><rect x="0.5" y="0.5" width="11" height="8" fill="#fff" stroke="#000" stroke-width="1"/><rect x="2" y="2" width="8" height="5" fill="#1020d0" /><rect x="0.5" y="9.5" width="9" height="4" fill="#d0e0f0" stroke="#000" stroke-width="1"/><path d="M19.00 12.50 L16.82 14.29 L17.10 17.10 L14.29 16.82 L12.50 19.00 L10.71 16.82 L7.90 17.10 L8.18 14.29 L6.00 12.50 L8.18 10.71 L7.90 7.90 L10.71 8.18 L12.50 6.00 L14.29 8.18 L17.10 7.90 L16.82 10.71 Z" fill="#f0f000" stroke="#000" stroke-width="1.3" shape-rendering="geometricPrecision"/><circle cx="12.5" cy="12.5" r="2.3" fill="#fff" stroke="#000" stroke-width="1.2"/><path d="M8 9 L10 11 M15 15 L17 17" fill="none" stroke="#000" stroke-width="0.8" /></svg><svg style="position:absolute;left:412px;top:56px;overflow:visible" width="19" height="19" viewBox="0 0 19 19" shape-rendering="crispEdges"><rect x="0.5" y="0.5" width="13" height="9" fill="#fff" stroke="#000" stroke-width="1"/><rect x="2" y="3" width="4" height="6" fill="#4060c0" /><rect x="4" y="2" width="3" height="3" fill="#c08060" /><path d="M18.00 12.50 L15.82 14.29 L16.10 17.10 L13.29 16.82 L11.50 19.00 L9.71 16.82 L6.90 17.10 L7.18 14.29 L5.00 12.50 L7.18 10.71 L6.90 7.90 L9.71 8.18 L11.50 6.00 L13.29 8.18 L16.10 7.90 L15.82 10.71 Z" fill="#f0f000" stroke="#000" stroke-width="1.3" shape-rendering="geometricPrecision"/><circle cx="11.5" cy="12.5" r="2.3" fill="#fff" stroke="#000" stroke-width="1.2"/><path d="M7 9 L9 11 M14 15 L16 17" fill="none" stroke="#000" stroke-width="0.8" /></svg><svg style="position:absolute;left:440px;top:59px;overflow:visible" width="16" height="14" viewBox="0 0 16 14" shape-rendering="crispEdges"><path d="M1 7 Q1 3 4 2 L6 0 Q9 0 10 3 L13 4 Q15 6 15 9 V13 H12 L10 11 Q8 11 6 13 H1 Z" fill="#999490" stroke="none" stroke-width="1" shape-rendering="geometricPrecision"/></svg><svg style="position:absolute;left:465px;top:57px;overflow:visible" width="18" height="17" viewBox="0 0 18 17" shape-rendering="crispEdges"><rect x="0.5" y="0.5" width="15" height="15" fill="#fff" stroke="#000" stroke-width="1"/><rect x="2" y="2" width="8" height="2" fill="#000" /><rect x="11" y="2" width="3" height="3" fill="#000" /><rect x="2" y="5" width="8" height="1" fill="#6080c0" /><rect x="1" y="8" width="14" height="2" fill="#0020e0" /><rect x="2" y="11" width="10" height="1" fill="#000" /><rect x="2" y="13" width="10" height="1" fill="#000" /><path d="M11 10 L18 17 M11 10 V15 M11 10 H16" fill="none" stroke="#e8e000" stroke-width="2" /><path d="M11 10 L17 16" fill="none" stroke="#000" stroke-width="0.8" /></svg><svg style="position:absolute;left:494px;top:60px;overflow:visible" width="11" height="9" viewBox="0 0 11 9" shape-rendering="crispEdges"><path d="M0.5 0.5 H7 L10.5 4 V8.5 H0.5 Z" fill="#fff" stroke="#000" stroke-width="1.2" /><rect x="2" y="2" width="1" height="5" fill="#000" /><rect x="4" y="3" width="3" height="1" fill="#808080" /><rect x="4" y="5" width="5" height="1" fill="#808080" /></svg><svg style="position:absolute;left:523px;top:57px;overflow:visible" width="18" height="18" viewBox="0 0 18 18" shape-rendering="crispEdges"><path d="M0 1.5 Q0 0 4 0 Q8 0 8 1.5 V9 Q8 10.5 4 10.5 Q0 10.5 0 9 Z" fill="#8f8a88" stroke="none" stroke-width="1" /><path d="M8 4 H12 V10" fill="none" stroke="#a09590" stroke-width="1" /><path d="M10 8 L12 10 L14 8" fill="none" stroke="#a09590" stroke-width="1" /><rect x="6.5" y="11.5" width="11" height="6" fill="none" stroke="#a09590" stroke-width="1"/><rect x="8" y="13" width="8" height="1" fill="#a09590" /><rect x="8" y="15" width="8" height="1" fill="#a09590" /></svg><svg style="position:absolute;left:556px;top:57px;overflow:visible" width="14" height="15" viewBox="0 0 14 15" shape-rendering="crispEdges"><circle cx="7" cy="7" r="6.6" fill="#f8f000" stroke="#000" stroke-width="1.1"/><path d="M7 7 L4 4 M7 7 L10 4 M7 1 V2.5 M7 11.5 V13 M1 7 H2.5 M11.5 7 H13" fill="none" stroke="#000" stroke-width="1" /></svg><svg style="position:absolute;left:580px;top:56px;overflow:visible" width="18" height="17" viewBox="0 0 18 17" shape-rendering="crispEdges"><path d="M6 0 L8 3 L10 0 M11 0 L13 3 L15 0" fill="none" stroke="#000" stroke-width="1" /><rect x="5.5" y="3.5" width="9" height="5" fill="#505060" stroke="#000" stroke-width="1"/><rect x="3.5" y="5.5" width="9" height="9" fill="#008000" stroke="#000" stroke-width="1"/><rect x="6.5" y="8.5" width="11" height="8" fill="#00e000" stroke="#000" stroke-width="1"/><rect x="0" y="8" width="2" height="2" fill="#008000" /><rect x="2" y="8" width="2" height="1" fill="#80d080" /></svg><svg style="position:absolute;left:611px;top:56px;overflow:visible" width="20" height="17" viewBox="0 0 20 17" shape-rendering="crispEdges"><path d="M3 5 Q3 2 5 2 Q7 2 7 5 V8 L8.5 9.5 H1.5 L3 8 Z" fill="#f0f000" stroke="#000" stroke-width="0.8" /><rect x="4" y="10" width="2" height="2" fill="#e02020" /><path d="M7 6 L12 2 M7 6 L12 12" fill="none" stroke="#000" stroke-width="1" /><rect x="12.5" y="0.5" width="7" height="3" fill="#fff" stroke="#000" stroke-width="1"/><rect x="12.5" y="11.5" width="7" height="3" fill="#fff" stroke="#000" stroke-width="1"/><rect x="14" y="12" width="3" height="2" fill="#2040e0" /><rect x="0" y="0" width="8" height="2" fill="#d8d8d8" /></svg><svg style="position:absolute;left:15px;top:83px;overflow:visible" width="20" height="19" viewBox="0 0 20 19" shape-rendering="crispEdges"><rect x="0.5" y="0.5" width="4" height="4" fill="#00a000" stroke="#000" stroke-width="1"/><rect x="2" y="5" width="1" height="13" fill="#000" /><rect x="6" y="2" width="8" height="1" fill="#404040" /><rect x="5.5" y="6.5" width="4" height="4" fill="#fff" stroke="#000" stroke-width="1"/><rect x="7" y="7" width="1" height="3" fill="#4040f0" /><rect x="10" y="8" width="7" height="1" fill="#404040" /><rect x="7" y="11" width="1" height="6" fill="#000" /><rect x="7" y="11" width="1" height="1" fill="#000" /><rect x="8" y="13" width="3" height="1" fill="#000" /><rect x="8" y="17" width="3" height="1" fill="#000" /><circle cx="12" cy="13.5" r="1.5" fill="#000" stroke="none" stroke-width="1"/><circle cx="12" cy="17.5" r="1.5" fill="#000" stroke="none" stroke-width="1"/><rect x="14" y="13" width="4" height="1" fill="#606060" /><rect x="14" y="17" width="4" height="1" fill="#606060" /><rect x="3" y="8" width="2" height="1" fill="#000" /></svg><svg style="position:absolute;left:42px;top:83px;overflow:visible" width="20" height="19" viewBox="0 0 20 19" shape-rendering="crispEdges"><rect x="0.5" y="1.5" width="10" height="4" fill="#004a00" stroke="#000" stroke-width="1"/><rect x="2" y="3" width="2" height="1" fill="#00d000" /><rect x="5" y="3" width="2" height="1" fill="#00d000" /><rect x="8" y="3" width="2" height="1" fill="#00d000" /><rect x="5" y="6" width="1" height="2" fill="#000" /><rect x="1" y="8" width="10" height="1" fill="#000" /><rect x="0.5" y="9.5" width="2" height="3" fill="#fff" stroke="#000" stroke-width="1"/><rect x="4.5" y="9.5" width="2" height="3" fill="#fff" stroke="#000" stroke-width="1"/><rect x="8.5" y="9.5" width="2" height="3" fill="#fff" stroke="#000" stroke-width="1"/><path d="M8 6 L19 17" fill="none" stroke="#000" stroke-width="3" /><path d="M7 5 L9 7" fill="none" stroke="#fff" stroke-width="2" /><circle cx="14" cy="3" r="1.5" fill="#e08080" stroke="none" stroke-width="1"/><circle cx="17" cy="5" r="1.2" fill="#c0a0a0" stroke="none" stroke-width="1"/><circle cx="12" cy="1" r="1" fill="#f0c0a0" stroke="none" stroke-width="1"/><circle cx="15" cy="7" r="1" fill="#e09090" stroke="none" stroke-width="1"/></svg><svg style="position:absolute;left:76px;top:85px;overflow:visible" width="15" height="16" viewBox="0 0 15 16" shape-rendering="crispEdges"><rect x="0.5" y="0.5" width="15" height="5" fill="#004a00" stroke="#000" stroke-width="1"/><rect x="2" y="2" width="2" height="2" fill="#00d000" /><rect x="5" y="2" width="2" height="2" fill="#00d000" /><rect x="9" y="2" width="2" height="2" fill="#00d000" /><rect x="12" y="2" width="2" height="2" fill="#00d000" /><rect x="7" y="6" width="2" height="3" fill="#000" /><rect x="1" y="8" width="14" height="1" fill="#000" /><rect x="1" y="8" width="1" height="3" fill="#000" /><rect x="5" y="8" width="1" height="3" fill="#000" /><rect x="10" y="8" width="1" height="3" fill="#000" /><rect x="14" y="8" width="1" height="3" fill="#000" /><rect x="0.5" y="11.5" width="2" height="4" fill="#fff" stroke="#000" stroke-width="1"/><rect x="0" y="15" width="3" height="1" fill="#000" /><rect x="4.5" y="11.5" width="2" height="4" fill="#fff" stroke="#000" stroke-width="1"/><rect x="4" y="15" width="3" height="1" fill="#000" /><rect x="9.5" y="11.5" width="2" height="4" fill="#fff" stroke="#000" stroke-width="1"/><rect x="9" y="15" width="3" height="1" fill="#000" /><rect x="13.5" y="11.5" width="2" height="4" fill="#fff" stroke="#000" stroke-width="1"/><rect x="13" y="15" width="3" height="1" fill="#000" /></svg><svg style="position:absolute;left:102px;top:86px;overflow:visible" width="15" height="12" viewBox="0 0 15 12" shape-rendering="crispEdges"><rect x="0.5" y="0.5" width="8" height="11" fill="#fff" stroke="#000" stroke-width="1"/><rect x="1" y="2" width="7" height="1" fill="#2040e0" /><rect x="2" y="4" width="1" height="1" fill="#000" /><rect x="4" y="4" width="1" height="1" fill="#000" /><rect x="6" y="4" width="1" height="1" fill="#000" /><rect x="2" y="6" width="1" height="1" fill="#000" /><rect x="4" y="6" width="1" height="1" fill="#000" /><rect x="6" y="6" width="1" height="1" fill="#000" /><rect x="2" y="8" width="1" height="1" fill="#000" /><rect x="4" y="8" width="1" height="1" fill="#000" /><rect x="6" y="8" width="1" height="1" fill="#000" /><rect x="10.5" y="0.5" width="4" height="11" fill="#fff" stroke="#000" stroke-width="1"/><rect x="12" y="5" width="1" height="2" fill="#8080f0" /></svg><svg style="position:absolute;left:128px;top:86px;overflow:visible" width="14" height="13" viewBox="0 0 14 13" shape-rendering="crispEdges"><rect x="0.5" y="0.5" width="13" height="12" fill="#008000" stroke="#000" stroke-width="1.5"/><path d="M7 3 L11 6.5 L7 10 L3 6.5 Z" fill="#f02020" stroke="none" stroke-width="1" /><circle cx="7" cy="6.5" r="4.5" fill="none" stroke="#004000" stroke-width="0.8"/></svg><svg style="position:absolute;left:153px;top:85px;overflow:visible" width="16" height="14" viewBox="0 0 16 14" shape-rendering="crispEdges"><path d="M1 9 L5 4 L9 5 L12 8 L10 12 L5 13 L1 11 Z" fill="#e8e000" stroke="#000" stroke-width="1" shape-rendering="geometricPrecision"/><circle cx="6" cy="9" r="2.2" fill="#c8d890" stroke="#8a8a40" stroke-width="0.8"/><path d="M3 2 L7 1 L13 4 L16 8 L14 10 L11 7 L7 5 L4 5 Z" fill="#f0f000" stroke="#000" stroke-width="1" shape-rendering="geometricPrecision"/><rect x="3" y="0" width="1" height="3" fill="#000" /></svg><svg style="position:absolute;left:186px;top:85px;overflow:visible" width="14" height="14" viewBox="0 0 14 14" shape-rendering="crispEdges"><path d="M0.5 1.5 Q0.5 0.5 2 0.5 H6.5 L7 1.5 L7.5 0.5 H12 Q13.5 0.5 13.5 1.5 V10.5 H0.5 Z" fill="#fff" stroke="#000" stroke-width="1.2" /><rect x="2" y="3" width="2" height="3" fill="#f00000" /><rect x="9" y="3" width="2" height="3" fill="#d04040" /><rect x="6.5" y="1" width="1" height="10" fill="#808080" /><rect x="3.5" y="6.5" width="8" height="7" fill="#fff" stroke="#e0d000" stroke-width="2"/><rect x="5" y="8" width="2" height="4" fill="#000" /><rect x="8" y="9" width="2" height="2" fill="#000" /></svg><svg style="position:absolute;left:210px;top:84px;overflow:visible" width="19" height="17" viewBox="0 0 19 17" shape-rendering="crispEdges"><rect x="0.5" y="0.5" width="11" height="16" fill="#7a0000" stroke="#000" stroke-width="1"/><rect x="8" y="7" width="2" height="2" fill="#000" /><path d="M13.5 5 Q13.5 3.5 15.5 3.5 Q17.5 3.5 17.5 5 V10 Q17.5 12 15.5 12 Q13.5 12 13.5 10 Z" fill="#fff" stroke="#404040" stroke-width="1" /><rect x="15" y="8" width="1" height="2" fill="#e0d000" /></svg><svg style="position:absolute;left:243px;top:85px;overflow:visible" width="15" height="15" viewBox="0 0 15 15" shape-rendering="crispEdges"><rect x="0" y="0" width="15" height="15" fill="#00e8f8" /><path d="M0 0 H5 L6 3 L9 2 V0 H15 V5 L12 6 L13 9 H15 V15 H10 V12 L7 11 V15 H0 V10 L3 9 L2 6 H0 Z" fill="#000070" stroke="none" stroke-width="1" /><rect x="7" y="5" width="2" height="4" fill="#00e8f8" /></svg><svg style="position:absolute;left:268px;top:84px;overflow:visible" width="17" height="17" viewBox="0 0 17 17" shape-rendering="crispEdges"><circle cx="8.5" cy="8.5" r="8" fill="#fff" stroke="#000" stroke-width="1.2"/><rect x="4.5" y="3.5" width="4" height="8" fill="#fff" stroke="#000" stroke-width="1"/><rect x="5" y="4" width="3" height="2" fill="#6080f0" /><rect x="9.5" y="6.5" width="4" height="5" fill="#303030" stroke="#000" stroke-width="1"/><path d="M5 12 L8 16" fill="none" stroke="#e02020" stroke-width="1.5" /></svg><svg style="position:absolute;left:295px;top:85px;overflow:visible" width="16" height="15" viewBox="0 0 16 15" shape-rendering="crispEdges"><rect x="0" y="0" width="3" height="3" fill="#00e0f0" /><rect x="0" y="3" width="3" height="4" fill="#a09000" /><rect x="0" y="7" width="3" height="3" fill="#6020a0" /><rect x="0" y="10" width="3" height="4" fill="#0010e0" /><rect x="13" y="0" width="3" height="3" fill="#000090" /><rect x="13" y="3" width="3" height="3" fill="#b02020" /><rect x="13" y="6" width="3" height="3" fill="#40c060" /><rect x="13" y="9" width="3" height="3" fill="#e0e000" /><rect x="13" y="12" width="3" height="3" fill="#008020" /><rect x="3" y="2" width="10" height="2" fill="#000" /><rect x="4" y="5" width="9" height="1" fill="#000" /><rect x="3" y="8" width="10" height="2" fill="#000" /><rect x="3" y="12" width="10" height="2" fill="#000" /></svg><svg style="position:absolute;left:319px;top:84px;overflow:visible" width="20" height="18" viewBox="0 0 20 18" shape-rendering="crispEdges"><rect x="1.5" y="0.5" width="8" height="3" fill="#008000" stroke="#000" stroke-width="1"/><rect x="5" y="4" width="1" height="2" fill="#000" /><rect x="1" y="6" width="9" height="1" fill="#000" /><rect x="0.5" y="7.5" width="2" height="2" fill="#000" stroke="#000" stroke-width="1"/><rect x="4.5" y="7.5" width="2" height="2" fill="#e0d000" stroke="#000" stroke-width="1"/><rect x="8.5" y="7.5" width="2" height="2" fill="#000" stroke="#000" stroke-width="1"/><rect x="5" y="10" width="1" height="6" fill="#000" /><rect x="5" y="15" width="6" height="1" fill="#000" /><path d="M9 13 L11 15.5 L9 18" fill="none" stroke="#000" stroke-width="1" /><rect x="14.5" y="5.5" width="5" height="3" fill="#008000" stroke="#000" stroke-width="1"/><rect x="15" y="10" width="2" height="2" fill="#000" /><rect x="18" y="10" width="2" height="2" fill="#000" /><rect x="14" y="13" width="2" height="2" fill="#000" /><rect x="17" y="13" width="3" height="2" fill="#e0d000" /></svg><svg style="position:absolute;left:359px;top:85px;overflow:visible" width="14" height="14" viewBox="0 0 14 14" shape-rendering="crispEdges"><path d="M4 9 Q4 2 7 2 Q10 2 10 9 L12 11 H2 Z" fill="#f8f000" stroke="none" stroke-width="1" shape-rendering="geometricPrecision"/><rect x="1" y="11" width="12" height="1" fill="#000" /><rect x="6" y="12" width="2" height="2" fill="#e02020" /><path d="M2 6 Q2 2 5 0 M12 6 Q12 2 9 0" fill="none" stroke="#b0b0b0" stroke-width="0.8" /></svg><svg style="position:absolute;left:383px;top:83px;overflow:visible" width="19" height="19" viewBox="0 0 19 19" shape-rendering="crispEdges"><rect x="5.5" y="0.5" width="9" height="8" fill="#fff" stroke="#000" stroke-width="1"/><rect x="6" y="2" width="8" height="5" fill="#1020e0" /><rect x="6.5" y="8.5" width="12" height="5" fill="#f8f8f8" stroke="#000" stroke-width="1"/><rect x="13" y="10" width="3" height="1" fill="#000" /><path d="M3 16 Q3 8 6 8 Q9 8 9 16 L11 17 H1 Z" fill="#f8f000" stroke="none" stroke-width="1" shape-rendering="geometricPrecision"/><rect x="0" y="16" width="12" height="1" fill="#000" /><rect x="5" y="17" width="2" height="2" fill="#8040c0" /></svg><svg style="position:absolute;left:408px;top:83px;overflow:visible" width="19" height="19" viewBox="0 0 19 19" shape-rendering="crispEdges"><path d="M3 0 H16 L15 4 H4 Z" fill="#0010c8" stroke="none" stroke-width="1" /><rect x="9" y="1" width="2" height="2" fill="#e0e000" /><rect x="4" y="4" width="11" height="1" fill="#102060" /><path d="M4.5 5 H14.5 V13 L12 14 H7 L4.5 13 Z" fill="#c8b060" stroke="none" stroke-width="1" /><path d="M6.5 5.5 H12.5 V11.5 L9.5 13.5 L6.5 11.5 Z" fill="#e8f0ff" stroke="#303040" stroke-width="0.6" /><rect x="7.5" y="7.5" width="1" height="1" fill="#4060c0" /><rect x="10.5" y="7.5" width="1" height="1" fill="#4060c0" /><path d="M0 19 V16 L3 14 L7 13 L9.5 15 L12 13 L16 14 L19 16 V19 Z" fill="#0010d8" stroke="#000" stroke-width="0.8" /><rect x="13" y="17" width="2" height="2" fill="#e0e000" /></svg><svg style="position:absolute;left:434px;top:83px;overflow:visible" width="19" height="19" viewBox="0 0 19 19" shape-rendering="crispEdges"><path d="M3 9 Q3 3 6 3 Q9 3 9 9 L10 10 H2 Z" fill="#98928e" stroke="none" stroke-width="1" /><circle cx="11" cy="13" r="4.5" fill="none" stroke="#98928e" stroke-width="2.5"/><circle cx="11" cy="13" r="1.5" fill="none" stroke="#98928e" stroke-width="1"/><path d="M1 7 Q1 1 6 0 M11 6 Q11 2 8 0" fill="none" stroke="#98928e" stroke-width="0.8" /></svg><svg style="position:absolute;left:473px;top:84px;overflow:visible" width="15" height="13" viewBox="0 0 15 13" shape-rendering="crispEdges"><path d="M0 13 L1 8 L3 10 L4 3 L6 7 L8 1 L10 6 L11 2 L13 8 L15 6 L15 13 Z" fill="#f81010" stroke="none" stroke-width="1" shape-rendering="geometricPrecision"/><path d="M2 12 L4 7 L6 10 L8 5 L10 9 L13 6 L13 12" fill="none" stroke="#f0e000" stroke-width="1.2" /><rect x="9" y="9" width="3" height="3" fill="#000" /></svg><svg style="position:absolute;left:499px;top:86px;overflow:visible" width="15" height="12" viewBox="0 0 15 12" shape-rendering="crispEdges"><rect x="0.5" y="0.5" width="14" height="11" fill="#f8f000" stroke="#000" stroke-width="1"/><rect x="2" y="3" width="1" height="1" fill="#000" /><rect x="4" y="3" width="1" height="1" fill="#000" /><rect x="2" y="5" width="1" height="1" fill="#000" /><rect x="4" y="5" width="1" height="1" fill="#000" /><rect x="2" y="7" width="1" height="1" fill="#000" /><rect x="4" y="7" width="1" height="1" fill="#000" /><circle cx="10.5" cy="6" r="2.5" fill="#000" stroke="none" stroke-width="1"/></svg><svg style="position:absolute;left:525px;top:84px;overflow:visible" width="18" height="16" viewBox="0 0 18 16" shape-rendering="crispEdges"><circle cx="4" cy="2.5" r="2" fill="#000" stroke="none" stroke-width="1"/><rect x="1" y="4" width="7" height="6" fill="#202830" /><rect x="2" y="10" width="2" height="4" fill="#405060" /><rect x="5" y="10" width="2" height="4" fill="#405060" /><rect x="10" y="2" width="8" height="3" fill="#f80000" /><rect x="12.5" y="0" width="3" height="8" fill="#f80000" /></svg><svg style="position:absolute;left:551px;top:86px;overflow:visible" width="15" height="13" viewBox="0 0 15 13" shape-rendering="crispEdges"><rect x="0.5" y="0.5" width="14" height="12" fill="#e0e0e0" stroke="#000" stroke-width="1.3"/><rect x="2" y="2" width="7" height="2" fill="#00d000" /><rect x="10.5" y="2.5" width="2" height="2" fill="#000" stroke="#000" stroke-width="1"/><rect x="2" y="6" width="5" height="1" fill="#e05050" /><rect x="2" y="8" width="5" height="1" fill="#e05050" /><rect x="2" y="10" width="5" height="1" fill="#e05050" /><rect x="8" y="6" width="1" height="1" fill="#e05050" /><rect x="10" y="6" width="1" height="1" fill="#e05050" /><rect x="12" y="6" width="1" height="1" fill="#e05050" /><rect x="8" y="8" width="1" height="1" fill="#e05050" /><rect x="10" y="8" width="1" height="1" fill="#e05050" /><rect x="12" y="8" width="1" height="1" fill="#e05050" /><rect x="8" y="10" width="1" height="1" fill="#e05050" /><rect x="10" y="10" width="1" height="1" fill="#e05050" /><rect x="12" y="10" width="1" height="1" fill="#e05050" /></svg><svg style="position:absolute;left:577px;top:85px;overflow:visible" width="16" height="16" viewBox="0 0 16 16" shape-rendering="crispEdges"><circle cx="8" cy="8" r="7" fill="#b0b0b8" stroke="#f80000" stroke-width="1.5"/><path d="M8 4 L12 8 L8 12 L4 8 Z" fill="#f80000" stroke="none" stroke-width="1" /></svg><svg style="position:absolute;left:601px;top:84px;overflow:visible" width="19" height="16" viewBox="0 0 19 16" shape-rendering="crispEdges"><rect x="9.5" y="0.5" width="7" height="4" fill="#206070" stroke="#000" stroke-width="1"/><path d="M0 9 L6 5 H17 V13 L12 16 H3 L0 13 Z" fill="#f0e800" stroke="none" stroke-width="1" shape-rendering="geometricPrecision"/><rect x="6" y="7" width="5" height="3" fill="#c0c080" /><rect x="3" y="13" width="9" height="1" fill="#a0a000" /></svg><svg style="position:absolute;left:635px;top:85px;overflow:visible" width="15" height="15" viewBox="0 0 15 15" shape-rendering="crispEdges"><rect x="2.5" y="0.5" width="3" height="2" fill="#1040e0" stroke="#000" stroke-width="1"/><rect x="1.5" y="3.5" width="5" height="2" fill="#e0e0e0" stroke="#000" stroke-width="1"/><rect x="3" y="6" width="1" height="6" fill="#000" /><rect x="10.5" y="2.5" width="3" height="2" fill="#e0e0e0" stroke="#000" stroke-width="1"/><rect x="9.5" y="9.5" width="3" height="2" fill="#e0e0e0" stroke="#000" stroke-width="1"/><rect x="3.5" y="12.5" width="3" height="2" fill="#e0e0e0" stroke="#000" stroke-width="1"/><path d="M7 4 L10 3 M6 5 L9 10 M4 12 L9 11" fill="none" stroke="#000" stroke-width="0.8" /></svg><svg style="position:absolute;left:660px;top:86px;overflow:visible" width="20" height="14" viewBox="0 0 20 14" shape-rendering="crispEdges"><rect x="2.5" y="0.5" width="8" height="6" fill="#1020f0" stroke="#000" stroke-width="1"/><rect x="6" y="7" width="1" height="2" fill="#000" /><rect x="0.5" y="9.5" width="11" height="4" fill="#f8f000" stroke="#000" stroke-width="1"/><rect x="7" y="11" width="3" height="1" fill="#2040c0" /><path d="M12 3 H17 L17 0.5 L20 4 L17 7.5 V5 H12 Z" fill="#d0c000" stroke="#404040" stroke-width="0.6" /></svg><svg style="position:absolute;left:686px;top:84px;overflow:visible" width="18" height="18" viewBox="0 0 18 18" shape-rendering="crispEdges"><circle cx="1.5" cy="9" r="1.5" fill="#203080" stroke="#000" stroke-width="1"/><circle cx="7.5" cy="2" r="1.5" fill="#203080" stroke="#000" stroke-width="1"/><circle cx="15" cy="2" r="1.5" fill="#203080" stroke="#000" stroke-width="1"/><path d="M1.5 9 L7.5 2 H15" fill="none" stroke="#000" stroke-width="1" /><path d="M13 5 L6 9 L13 12 Z" fill="#f0e000" stroke="#000" stroke-width="0.8" /><rect x="11.5" y="12.5" width="3" height="2" fill="#1030d0" stroke="#000" stroke-width="1"/><rect x="9.5" y="15.5" width="7" height="2" fill="#e0e0e0" stroke="#000" stroke-width="1"/></svg><svg style="position:absolute;left:27px;top:165px;overflow:visible" width="15" height="15" viewBox="0 0 15 15" shape-rendering="crispEdges"><rect x="0.5" y="0.5" width="15" height="4" fill="#004a00" stroke="#000" stroke-width="1"/><rect x="2" y="2" width="2" height="1" fill="#00d000" /><rect x="5" y="2" width="2" height="1" fill="#00d000" /><rect x="9" y="2" width="2" height="1" fill="#00d000" /><rect x="12" y="2" width="2" height="1" fill="#00d000" /><rect x="7" y="5" width="2" height="3" fill="#000" /><rect x="1" y="7" width="14" height="1" fill="#000" /><rect x="1" y="7" width="1" height="3" fill="#000" /><rect x="5" y="7" width="1" height="3" fill="#000" /><rect x="10" y="7" width="1" height="3" fill="#000" /><rect x="14" y="7" width="1" height="3" fill="#000" /><rect x="0.5" y="10.5" width="2" height="5" fill="#fff" stroke="#000" stroke-width="1"/><rect x="0" y="15" width="3" height="1" fill="#000" /><rect x="4.5" y="10.5" width="2" height="5" fill="#fff" stroke="#000" stroke-width="1"/><rect x="4" y="15" width="3" height="1" fill="#000" /><rect x="9.5" y="10.5" width="2" height="5" fill="#fff" stroke="#000" stroke-width="1"/><rect x="9" y="15" width="3" height="1" fill="#000" /><rect x="13.5" y="10.5" width="2" height="5" fill="#fff" stroke="#000" stroke-width="1"/><rect x="13" y="15" width="3" height="1" fill="#000" /><path d="M1 8 L4.5 13 L14 1" fill="none" stroke="#d02020" stroke-width="1.8" shape-rendering="geometricPrecision"/></svg><svg style="position:absolute;left:12px;top:590px;overflow:visible" width="16" height="15" viewBox="0 0 16 15" shape-rendering="crispEdges"><rect x="0.5" y="0.5" width="15" height="5" fill="#004a00" stroke="#000" stroke-width="1"/><rect x="2" y="2" width="2" height="2" fill="#00d000" /><rect x="5" y="2" width="2" height="2" fill="#00d000" /><rect x="9" y="2" width="2" height="2" fill="#00d000" /><rect x="12" y="2" width="2" height="2" fill="#00d000" /><rect x="7" y="6" width="2" height="3" fill="#000" /><rect x="1" y="8" width="14" height="1" fill="#000" /><rect x="1" y="8" width="1" height="3" fill="#000" /><rect x="5" y="8" width="1" height="3" fill="#000" /><rect x="10" y="8" width="1" height="3" fill="#000" /><rect x="14" y="8" width="1" height="3" fill="#000" /><rect x="0.5" y="11.5" width="2" height="4" fill="#fff" stroke="#000" stroke-width="1"/><rect x="0" y="15" width="3" height="1" fill="#000" /><rect x="4.5" y="11.5" width="2" height="4" fill="#fff" stroke="#000" stroke-width="1"/><rect x="4" y="15" width="3" height="1" fill="#000" /><rect x="9.5" y="11.5" width="2" height="4" fill="#fff" stroke="#000" stroke-width="1"/><rect x="9" y="15" width="3" height="1" fill="#000" /><rect x="13.5" y="11.5" width="2" height="4" fill="#fff" stroke="#000" stroke-width="1"/><rect x="13" y="15" width="3" height="1" fill="#000" /></svg>
</body></html>
